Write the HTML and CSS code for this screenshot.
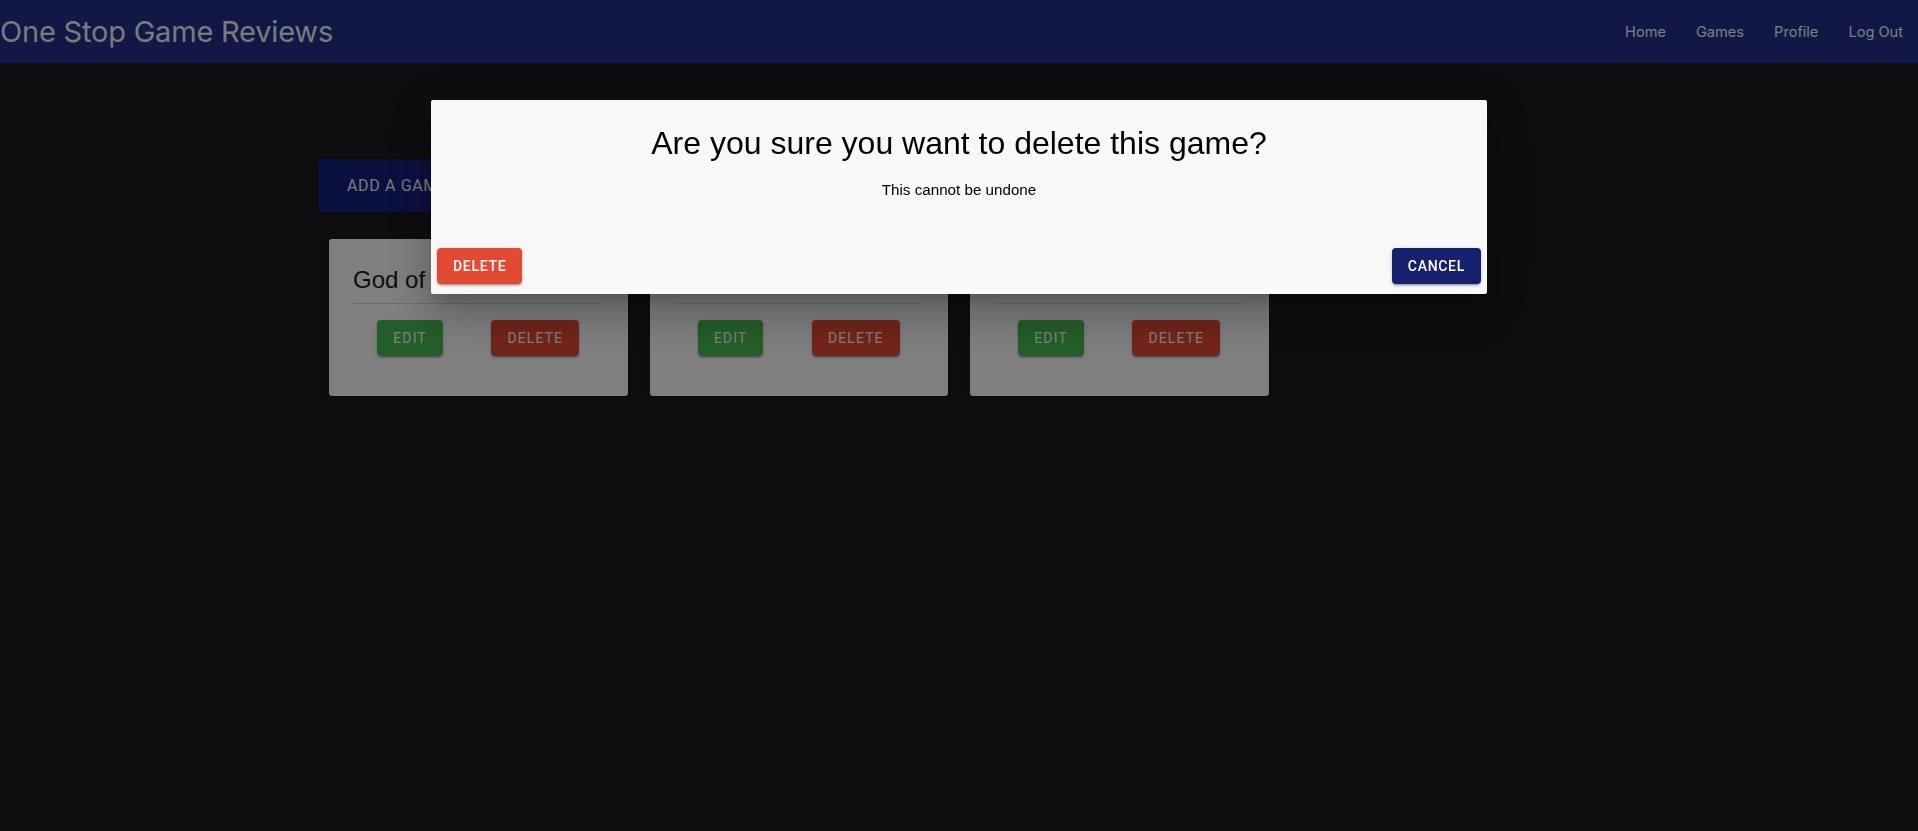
FILE: index.html
```html
<!DOCTYPE html>
<html lang="en">
<head>
<meta charset="utf-8">
<title>One Stop Game Reviews</title>
<link rel="stylesheet" href="styles.css">
</head>
<body>
<div class="page">
  <header class="topbar">
    <h1 class="brand">One Stop Game Reviews</h1>
    <nav class="nav">
      <a class="nav-link" href="#">Home</a>
      <a class="nav-link" href="#">Games</a>
      <a class="nav-link" href="#">Profile</a>
      <a class="nav-link" href="#">Log Out</a>
    </nav>
  </header>
  <main class="content">
    <button class="add-btn">Add a Game</button>
    <div class="card-grid">
      <article class="card">
        <h2 class="card-title">God of War</h2>
        <hr class="divider">
        <div class="card-actions">
          <button class="btn card-btn btn-edit">Edit</button>
          <button class="btn card-btn btn-delete">Delete</button>
        </div>
      </article>
      <article class="card">
        <h2 class="card-title">Elden Ring</h2>
        <hr class="divider">
        <div class="card-actions">
          <button class="btn card-btn btn-edit">Edit</button>
          <button class="btn card-btn btn-delete">Delete</button>
        </div>
      </article>
      <article class="card">
        <h2 class="card-title">Halo Infinite</h2>
        <hr class="divider">
        <div class="card-actions">
          <button class="btn card-btn btn-edit">Edit</button>
          <button class="btn card-btn btn-delete">Delete</button>
        </div>
      </article>
    </div>
  </main>
</div>
<div class="backdrop"></div>
<div class="dialog" role="dialog">
  <div class="dialog-body">
    <h2 class="dialog-title">Are you sure you want to delete this game?</h2>
    <p class="dialog-text">This cannot be undone</p>
  </div>
  <div class="dialog-actions">
    <button class="btn btn-delete">Delete</button>
    <button class="btn btn-cancel">Cancel</button>
  </div>
</div>
</body>
</html>
```
FILE: styles.css
```css
html, body {
  margin: 0;
  padding: 0;
}
body {
  background: #1c1c1c;
  font-family: "Liberation Sans", Arial, sans-serif;
  min-height: 831px;
}
.topbar {
  height: 63px;
  background: #22308a;
  display: flex;
  align-items: center;
  justify-content: space-between;
}
.brand {
  margin: 0;
  font-family: Inter, "Noto Sans", sans-serif;
  font-size: 29px;
  font-weight: 400;
  color: #f4f4f4;
  letter-spacing: -0.2px;
}
.nav {
  display: flex;
}
.nav-link {
  font-family: Inter, "Noto Sans", sans-serif;
  font-size: 14.6px;
  color: #fafafa;
  text-decoration: none;
  padding: 0 15px;
}
.content {
  width: 1282px;
  margin: 96px auto 0;
}
.add-btn {
  display: block;
  height: 53px;
  padding: 0 29px;
  border: 0;
  border-radius: 2px;
  background: #14207f;
  color: #f4f4f4;
  font-family: Roboto, "Liberation Sans", sans-serif;
  font-size: 16px;
  font-weight: 400;
  letter-spacing: 0.04em;
  text-transform: uppercase;
}
.card-grid {
  margin-top: 27px;
  padding: 0 11px;
  display: grid;
  grid-template-columns: repeat(4, 1fr);
  column-gap: 22px;
}
.card {
  background: #ffffff;
  border-radius: 3px;
  padding: 24px 24px 40px;
  box-shadow: 0 2px 1px -1px rgba(0,0,0,0.2), 0 1px 1px 0 rgba(0,0,0,0.14), 0 1px 3px 0 rgba(0,0,0,0.12);
}
.card-title {
  margin: 0;
  font-size: 24px;
  line-height: 34px;
  font-weight: 400;
  color: #1a1a1a;
  white-space: nowrap;
}
.divider {
  margin: 6px 0 16px;
  height: 0;
  border: 0;
  border-top: 1px solid rgba(0,0,0,0.14);
}
.card-actions {
  display: flex;
  justify-content: space-around;
}
.btn {
  height: 36px;
  padding: 0 16px;
  border: 0;
  border-radius: 4px;
  color: #ffffff;
  font-family: Roboto, "Liberation Sans", sans-serif;
  font-size: 14px;
  font-weight: 500;
  letter-spacing: 0.7px;
  text-transform: uppercase;
  box-shadow: 0 3px 1px -2px rgba(0,0,0,0.2), 0 2px 2px 0 rgba(0,0,0,0.14), 0 1px 5px 0 rgba(0,0,0,0.12);
}
.card-btn {
  font-weight: 400;
  letter-spacing: 1.1px;
}
.btn-edit {
  background: #46bc50;
}
.btn-delete {
  background: #e44a31;
}
.btn-cancel {
  background: #15206e;
}
.backdrop {
  position: fixed;
  inset: 0;
  background: rgba(0,0,0,0.5);
}
.dialog {
  position: fixed;
  top: 100px;
  left: 50%;
  transform: translateX(-50%);
  width: 1056px;
  height: 194px;
  background: #f8f8f8;
  border-radius: 2px;
  display: flex;
  flex-direction: column;
  box-shadow: 0 11px 15px -7px rgba(0,0,0,0.2), 0 24px 38px 3px rgba(0,0,0,0.14), 0 9px 46px 8px rgba(0,0,0,0.12);
}
.dialog-body {
  padding-top: 24px;
  text-align: center;
  color: #000000;
}
.dialog-title {
  margin: 0;
  font-size: 32px;
  line-height: 38px;
  font-weight: 400;
}
.dialog-text {
  margin: 16px 0 0;
  font-size: 15.2px;
  line-height: 23px;
}
.dialog-actions {
  margin-top: auto;
  padding: 0 6px 10px;
  display: flex;
  justify-content: space-between;
}
```
